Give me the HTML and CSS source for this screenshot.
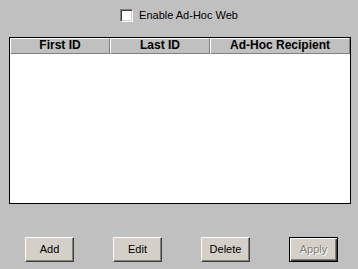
FILE: index.html
```html
<!DOCTYPE html>
<html>
<head>
<meta charset="utf-8">
<link rel="stylesheet" href="styles.css">
</head>
<body>
<div class="top">
  <label class="check"><span class="box"></span><span class="check-text">Enable Ad-Hoc Web</span></label>
</div>
<div class="list">
  <div class="list-head">
    <div class="col c1">First ID</div>
    <div class="col c2">Last ID</div>
    <div class="col c3">Ad-Hoc Recipient</div>
  </div>
</div>
<div class="buttons">
  <button class="btn">Add</button>
  <button class="btn">Edit</button>
  <button class="btn">Delete</button>
  <button class="btn default disabled">Apply</button>
</div>
</body>
</html>
```

FILE: styles.css
```css
html, body {
  margin: 0;
  padding: 0;
}
body {
  width: 358px;
  height: 269px;
  background: #c0c0c0;
  font-family: "Liberation Sans", Arial, sans-serif;
  font-size: 11px;
  color: #000;
  overflow: hidden;
}
.top {
  height: 37px;
  box-sizing: border-box;
  padding-top: 9px;
  display: flex;
  justify-content: center;
  align-items: flex-start;
}
.check {
  display: flex;
  align-items: center;
}
.box {
  width: 13px;
  height: 13px;
  box-sizing: border-box;
  background: #fff;
  border: 1px solid;
  border-color: #808080 #fff #fff #808080;
  box-shadow: inset 1px 1px 0 #404040, inset -1px -1px 0 #d4d0c8;
}
.check-text {
  margin-left: 6px;
  line-height: 13px;
  margin-top: -1px;
}
.list {
  margin-left: 9px;
  width: 342px;
  height: 167px;
  box-sizing: border-box;
  border: 1px solid #000;
  background: #fff;
}
.list-head {
  display: flex;
  height: 16px;
}
.col {
  box-sizing: border-box;
  height: 16px;
  background: #c0c0c0;
  border-top: 1px solid #fff;
  border-left: 1px solid #fff;
  border-right: 1px solid #808080;
  border-bottom: 1px solid #808080;
  font-weight: bold;
  font-size: 12px;
  line-height: 13px;
  text-align: center;
}
.c1 { width: 100px; }
.c2 { width: 100px; }
.c3 { width: 140px; }
.buttons {
  display: flex;
  gap: 39px;
  padding-left: 25px;
  margin-top: 33px;
}
.btn {
  width: 49px;
  height: 25px;
  box-sizing: border-box;
  margin: 0;
  padding: 0;
  background: #d4d0c8;
  border: 1px solid;
  border-color: #fff #404040 #404040 #fff;
  box-shadow: inset -1px -1px 0 #808080;
  font-family: "Liberation Sans", Arial, sans-serif;
  font-size: 11px;
  color: #000;
  line-height: 13px;
}
.btn.default {
  border-color: #000;
  box-shadow: inset 1px 1px 0 #fff, inset -1px -1px 0 #404040, inset -2px -2px 0 #808080;
}
.btn.disabled {
  color: #808080;
  text-shadow: 1px 1px 0 #fff;
}
```
